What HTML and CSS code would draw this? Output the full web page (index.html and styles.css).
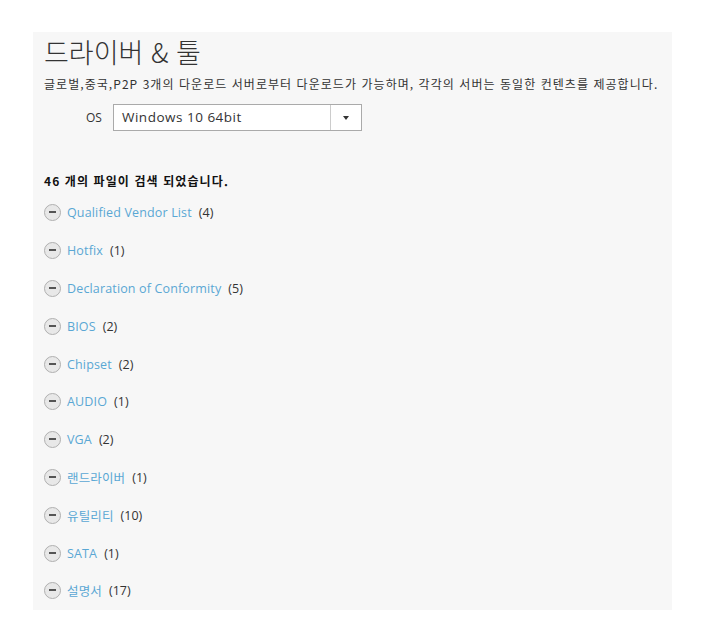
FILE: index.html
```html
<!DOCTYPE html>
<html lang="ko">
<head>
    <meta charset="UTF-8">
    <title>드라이버 &amp; 툴</title>
    <link rel="stylesheet" href="styles.css">
</head>
<body>
    <div class="panel">
        <h1 class="title">드라이버 &amp; 툴</h1>
        <p class="desc">글로벌,중국,P2P 3개의 다운로드 서버로부터 다운로드가 가능하며, 각각의 서버는 동일한 컨텐츠를 제공합니다.</p>

        <div class="os-row">
            <label class="os-label">OS</label>
            <div class="select">
                <span class="select-value">Windows 10 64bit</span>
                <span class="select-btn"><span class="caret"></span></span>
            </div>
        </div>

        <p class="result">46 개의 파일이 검색 되었습니다.</p>

        <ul class="files">
            <li><span class="toggle"></span><a href="#">Qualified Vendor List</a><span class="count">(4)</span></li>
            <li><span class="toggle"></span><a href="#">Hotfix</a><span class="count">(1)</span></li>
            <li><span class="toggle"></span><a href="#">Declaration of Conformity</a><span class="count">(5)</span></li>
            <li><span class="toggle"></span><a href="#">BIOS</a><span class="count">(2)</span></li>
            <li><span class="toggle"></span><a href="#">Chipset</a><span class="count">(2)</span></li>
            <li><span class="toggle"></span><a href="#">AUDIO</a><span class="count">(1)</span></li>
            <li><span class="toggle"></span><a href="#">VGA</a><span class="count">(2)</span></li>
            <li><span class="toggle"></span><a href="#">랜드라이버</a><span class="count">(1)</span></li>
            <li><span class="toggle"></span><a href="#">유틸리티</a><span class="count">(10)</span></li>
            <li><span class="toggle"></span><a href="#">SATA</a><span class="count">(1)</span></li>
            <li><span class="toggle"></span><a href="#">설명서</a><span class="count">(17)</span></li>
        </ul>
    </div>
</body>
</html>
```

FILE: styles.css
```css
body {
    margin: 0;
    background-color: #fff;
    font-family: 'Open Sans', 'Noto Sans CJK KR', sans-serif;
    color: #333;
}

.panel {
    margin: 32px 0 0 33px;
    width: 639px;
    height: 578px;
    background-color: #f7f7f7;
    padding: 0 0 0 11px;
    box-sizing: border-box;
}

.title {
    margin: 0;
    padding-top: 3px;
    font-family: 'Noto Sans CJK KR', sans-serif;
    font-size: 27px;
    font-weight: 300;
    line-height: 34px;
    color: #333;
}

.desc {
    margin: 7px 0 0;
    font-family: 'Noto Sans CJK KR', sans-serif;
    font-size: 12px;
    line-height: 16px;
    letter-spacing: 1.05px;
    white-space: nowrap;
}

.os-row {
    display: flex;
    align-items: center;
    margin: 12px 0 0 42px;
}

.os-label {
    font-size: 12px;
    width: 27px;
}

.select {
    display: flex;
    width: 249px;
    height: 27px;
    border: 1px solid #aaa;
    background-color: #fff;
    box-sizing: border-box;
}

.select-value {
    flex: 1;
    padding-left: 8px;
    font-size: 13.5px;
    letter-spacing: 0.5px;
    line-height: 25px;
}

.select-btn {
    width: 30px;
    border-left: 1px solid #ccc;
    display: flex;
    align-items: center;
    justify-content: center;
}

.caret {
    width: 0;
    height: 0;
    border-left: 3px solid transparent;
    border-right: 3px solid transparent;
    border-top: 4px solid #333;
}

.result {
    margin: 42px 0 0;
    font-family: 'Noto Sans CJK KR', sans-serif;
    font-size: 12px;
    font-weight: bold;
    letter-spacing: 1.1px;
    line-height: 16px;
    color: #111;
}

.files {
    list-style: none;
    margin: 5px 0 0;
    padding: 0;
}

.files li {
    display: flex;
    align-items: center;
    height: 37.8px;
    font-size: 12.5px;
}

.toggle {
    position: relative;
    width: 15px;
    height: 15px;
    border: 1px solid #b0b0b0;
    border-radius: 50%;
    background-color: #e8e8e8;
    margin-right: 6px;
}

.toggle::after {
    content: '';
    position: absolute;
    left: 4px;
    top: 6px;
    width: 7px;
    height: 2px;
    background-color: #555;
}

.files a {
    color: #5aa7d4;
    text-decoration: none;
    letter-spacing: 0.15px;
}

.count {
    margin-left: 7px;
    color: #333;
}
```
